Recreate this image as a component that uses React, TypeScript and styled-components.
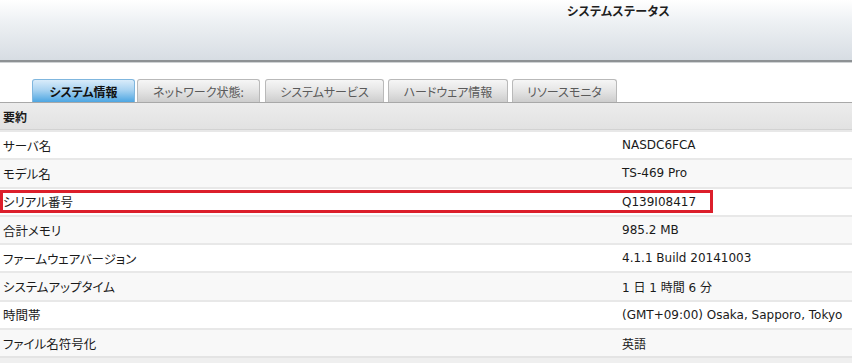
import * as React from 'react';
import styled, { createGlobalStyle } from 'styled-components';

const GlobalStyle = createGlobalStyle`
  body {
    margin: 0;
    background: #ffffff;
    font-family: "Noto Sans CJK JP", "DejaVu Sans", sans-serif;
  }
`;

const Page = styled.div`
  width: 852px;
  height: 363px;
  overflow: hidden;
  display: flex;
  flex-direction: column;
`;

const Header = styled.div`
  height: 60px;
  flex: 0 0 60px;
  background: linear-gradient(to bottom, #ffffff 0%, #eef1f4 35%, #d7dde3 100%);
  border-bottom: 2px solid #8d9194;
  box-shadow: 0 1px 0 #cfd2d4;
  padding-left: 567px;
  box-sizing: content-box;
`;

const Title = styled.h1`
  margin: 0;
  padding-top: 2px;
  font-size: 12px;
  line-height: 18px;
  font-weight: bold;
  color: #1e1e1e;
  font-feature-settings: "palt";
  letter-spacing: 0.3px;
`;

const TabBar = styled.div`
  margin-top: 17px;
  display: flex;
  align-items: flex-end;
  padding-left: 32px;
  height: 23px;
  border-bottom: 1px solid #a8a8a8;
`;

const Tab = styled.div<{ $active?: boolean; $w: number; $gap: number }>`
  width: ${p => p.$w}px;
  margin-right: ${p => p.$gap}px;
  height: 23px;
  box-sizing: border-box;
  display: flex;
  align-items: center;
  justify-content: center;
  border: 1px solid ${p => (p.$active ? '#7fb6de' : '#b9b9b9')};
  border-bottom: none;
  border-radius: 3px 3px 0 0;
  background: ${p =>
    p.$active
      ? 'linear-gradient(to bottom, #d9ecfa 0%, #a9d3f1 45%, #4da6e2 100%)'
      : 'linear-gradient(to bottom, #f6f6f6 0%, #e4e4e4 50%, #cdcdcd 100%)'};
  font-size: 12px;
  font-weight: ${p => (p.$active ? 'bold' : 'normal')};
  color: ${p => (p.$active ? '#111111' : '#5a5a5a')};
  font-feature-settings: "palt";
  white-space: nowrap;
`;

const SectionHead = styled.div`
  height: 27px;
  flex: 0 0 27px;
  display: flex;
  align-items: center;
  padding-left: 3px;
  background: linear-gradient(to bottom, #ececec 0%, #e2e2e2 100%);
  border-bottom: 1px solid #d2d2d2;
  box-sizing: border-box;
  font-size: 12px;
  font-weight: bold;
  color: #1a1a1a;
`;

const Row = styled.div<{ $alt: boolean }>`
  position: relative;
  display: grid;
  grid-template-columns: 622px 1fr;
  align-items: center;
  height: 28.3px;
  box-sizing: border-box;
  border-top: 2px solid #e8e8e8;
  background: ${p => (p.$alt ? '#f8f8f8' : '#ffffff')};
`;

const Label = styled.div`
  padding-left: 3px;
  font-size: 12.5px;
  color: #1a1a1a;
  font-feature-settings: "palt";
  white-space: nowrap;
`;

const Value = styled.div`
  font-family: "DejaVu Sans", "Noto Sans CJK JP", sans-serif;
  font-size: 12px;
  color: #1a1a1a;
  white-space: nowrap;
`;

const Highlight = styled.div`
  position: absolute;
  left: 0;
  top: 1px;
  width: 713px;
  height: 23px;
  box-sizing: border-box;
  border: 3px solid #dc1f2b;
  pointer-events: none;
`;

const Footer = styled.div`
  flex: 1;
  background: #efefef;
  border-top: 2px solid #e4e4e4;
`;

const tabs = [
  { name: 'システム情報', w: 103, gap: 2, active: true },
  { name: 'ネットワーク状態:', w: 123, gap: 5 },
  { name: 'システムサービス', w: 119, gap: 4 },
  { name: 'ハードウェア情報', w: 120, gap: 4 },
  { name: 'リソースモニタ', w: 105, gap: 0 },
];

const rows = [
  { label: 'サーバ名', value: 'NASDC6FCA' },
  { label: 'モデル名', value: 'TS-469 Pro' },
  { label: 'シリアル番号', value: 'Q139I08417', marked: true },
  { label: '合計メモリ', value: '985.2 MB' },
  { label: 'ファームウェアバージョン', value: '4.1.1 Build 20141003' },
  { label: 'システムアップタイム', value: '1 日 1 時間 6 分' },
  { label: '時間帯', value: '(GMT+09:00) Osaka, Sapporo, Tokyo' },
  { label: 'ファイル名符号化', value: '英語' },
];

export default function App() {
  return (
    <Page>
      <GlobalStyle />
      <Header>
        <Title>システムステータス</Title>
      </Header>
      <TabBar>
        {tabs.map(t => (
          <Tab key={t.name} $active={t.active} $w={t.w} $gap={t.gap}>
            {t.name}
          </Tab>
        ))}
      </TabBar>
      <SectionHead>要約</SectionHead>
      {rows.map((r, i) => (
        <Row key={r.label} $alt={i % 2 === 1}>
          <Label>{r.label}</Label>
          <Value>{r.value}</Value>
          {r.marked && <Highlight />}
        </Row>
      ))}
      <Footer />
    </Page>
  );
}
